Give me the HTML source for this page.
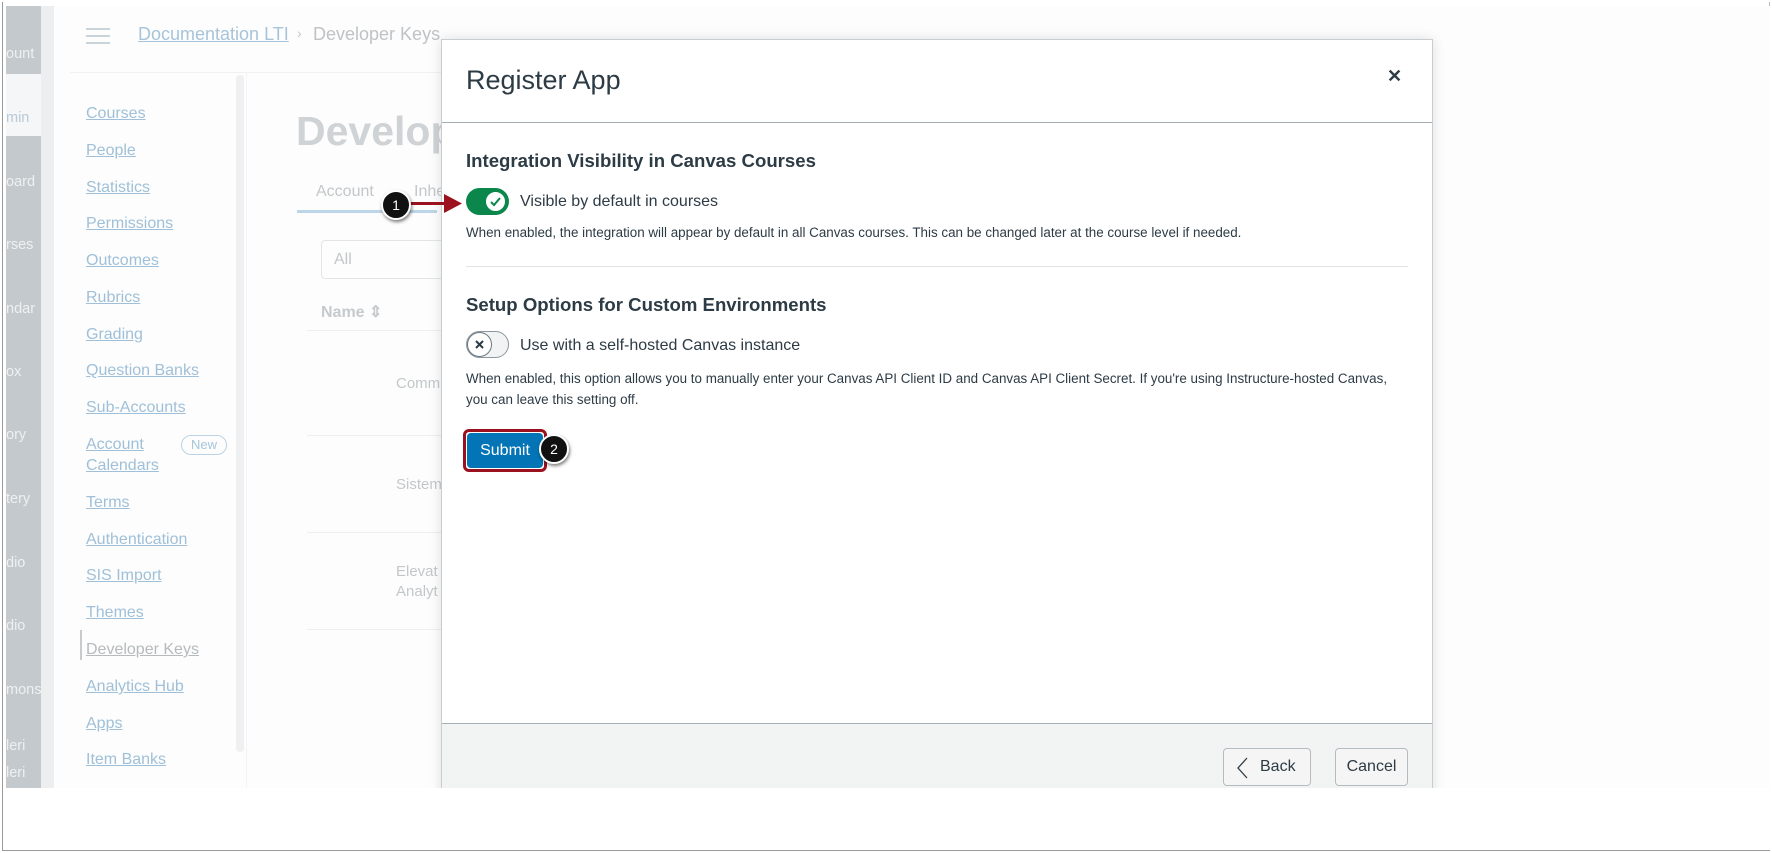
<!DOCTYPE html>
<html><head><meta charset="utf-8"><style>
*{margin:0;padding:0;box-sizing:border-box}
body{width:1772px;height:853px;background:#fff;position:relative;overflow:hidden;font-family:"Liberation Sans",sans-serif;}
.a{position:absolute;white-space:nowrap}
.nav{position:absolute;left:86px;color:#9fc0d8;font-size:16px;text-decoration:underline}
.side{position:absolute;left:6px;width:35px;color:#eef1f2;font-size:14.5px;overflow:hidden}
.t{color:#2d3b45}
</style></head><body>
<div class="a" style="left:2px;top:2px;width:1768px;height:849px;border:1px solid #9a9a9a;border-top:none;border-right:1px solid #bbb"></div>
<div class="a" style="left:6px;top:6px;width:1764px;height:782px;background:#fdfdfd"></div>
<div class="a" style="left:6px;top:6px;width:35px;height:782px;background:#c3c9cd"></div>
<div class="a" style="left:6px;top:74px;width:35px;height:62px;background:#f4f6f7"></div>
<div class="a" style="left:41px;top:6px;width:13px;height:782px;background:#eceeef"></div>
<div class="side" style="top:46px">ount</div>
<div class="side" style="top:110px;color:#b9c9d6">min</div>
<div class="side" style="top:174px">oard</div>
<div class="side" style="top:237px">rses</div>
<div class="side" style="top:301px">ndar</div>
<div class="side" style="top:364px">ox</div>
<div class="side" style="top:427px">ory</div>
<div class="side" style="top:491px">tery</div>
<div class="side" style="top:555px">dio</div>
<div class="side" style="top:618px">dio</div>
<div class="side" style="top:682px">mons</div>
<div class="side" style="top:738px">leri</div>
<div class="side" style="top:765px">leri</div>
<div class="a" style="left:86px;top:28px;width:24px;height:2px;background:#c8d3da;box-shadow:0 7px 0 #c8d3da,0 14px 0 #c8d3da"></div>
<div class="a" style="left:138px;top:24px;font-size:18px;color:#a7c4da;text-decoration:underline">Documentation LTI</div>
<div class="a" style="left:297px;top:25px;font-size:14px;color:#c3c7ca">›</div>
<div class="a" style="left:313px;top:24px;font-size:18px;color:#bfc3c6">Developer Keys</div>
<div class="a" style="left:70px;top:72px;width:1360px;height:1px;background:#f0f1f2"></div>
<div class="nav" style="top:105px">Courses</div>
<div class="nav" style="top:142px">People</div>
<div class="nav" style="top:179px">Statistics</div>
<div class="nav" style="top:215px">Permissions</div>
<div class="nav" style="top:252px">Outcomes</div>
<div class="nav" style="top:289px">Rubrics</div>
<div class="nav" style="top:326px">Grading</div>
<div class="nav" style="top:362px">Question Banks</div>
<div class="nav" style="top:399px">Sub-Accounts</div>
<div class="nav" style="top:436px">Account</div>
<div class="nav" style="top:457px">Calendars</div>
<div class="a" style="left:181px;top:435px;width:46px;height:20px;border:1px solid #bcd3e3;border-radius:10px;color:#a7c4da;font-size:13px;text-align:center;line-height:18px">New</div>
<div class="nav" style="top:494px">Terms</div>
<div class="nav" style="top:531px">Authentication</div>
<div class="nav" style="top:567px">SIS Import</div>
<div class="nav" style="top:604px">Themes</div>
<div class="a" style="left:80px;top:630px;width:2px;height:30px;background:#c7cbce"></div>
<div class="nav" style="top:641px;color:#b6babd">Developer Keys</div>
<div class="nav" style="top:678px">Analytics Hub</div>
<div class="nav" style="top:715px">Apps</div>
<div class="nav" style="top:751px">Item Banks</div>
<div class="a" style="left:236px;top:75px;width:8px;height:677px;background:#eef0f1;border-radius:4px"></div>
<div class="a" style="left:246px;top:72px;width:1px;height:716px;background:#f3f4f5"></div>
<div class="a" style="left:296px;top:108px;font-size:41px;font-weight:bold;color:#cfd3d6">Develope</div>
<div class="a" style="left:316px;top:183px;font-size:16px;color:#c3c7ca">Account</div>
<div class="a" style="left:414px;top:183px;font-size:16px;color:#c3c7ca">Inhe</div>
<div class="a" style="left:297px;top:210px;width:140px;height:3px;background:#bcd6e8"></div>
<div class="a" style="left:321px;top:240px;width:140px;height:39px;border:1px solid #e2e5e7;border-radius:4px;color:#c3c7ca;font-size:16px;padding:10px 12px">All</div>
<div class="a" style="left:321px;top:302px;font-size:16px;font-weight:bold;color:#c6cacd">Name ⇕</div>
<div class="a" style="left:307px;top:330px;width:140px;height:1px;background:#eceeef"></div>
<div class="a" style="left:307px;top:435px;width:140px;height:1px;background:#eceeef"></div>
<div class="a" style="left:307px;top:532px;width:140px;height:1px;background:#eceeef"></div>
<div class="a" style="left:307px;top:629px;width:140px;height:1px;background:#eceeef"></div>
<div class="a" style="left:396px;top:375px;font-size:15px;color:#c3c7ca">Comm</div>
<div class="a" style="left:396px;top:476px;font-size:15px;color:#c3c7ca">Sistem</div>
<div class="a" style="left:396px;top:562px;font-size:15px;color:#c3c7ca;line-height:20px">Elevat<br>Analyt</div>
<div class="a" style="left:441px;top:39px;width:992px;height:760px;background:#fff;border:1px solid #c7cdd1;box-shadow:0 0 12px rgba(0,0,0,.12)"></div>
<div class="a t" style="left:466px;top:65px;font-size:27px">Register App</div>
<div class="a t" style="left:1387px;top:66px;font-size:18px;font-weight:bold">✕</div>
<div class="a" style="left:442px;top:122px;width:990px;height:1px;background:#a5afb5"></div>
<div class="a t" style="left:466px;top:150px;font-size:18.6px;font-weight:bold">Integration Visibility in Canvas Courses</div>
<div class="a" style="left:466px;top:188px;width:43px;height:27px;border-radius:14px;background:#0b874b"></div>
<div class="a" style="left:484px;top:190px;width:23px;height:23px;border-radius:50%;background:#fff;border:2px solid #0b874b"></div>
<svg class="a" style="left:484px;top:190px" width="23" height="23"><path d="M7 12l3 3 6-7" fill="none" stroke="#0b874b" stroke-width="2"/></svg>
<div class="a t" style="left:520px;top:193px;font-size:16px">Visible by default in courses</div>
<div class="a t" style="left:466px;top:225px;font-size:13.4px">When enabled, the integration will appear by default in all Canvas courses. This can be changed later at the course level if needed.</div>
<div class="a" style="left:466px;top:266px;width:942px;height:1px;background:#dfe3e5"></div>
<div class="a t" style="left:466px;top:294px;font-size:18.6px;font-weight:bold">Setup Options for Custom Environments</div>
<div class="a" style="left:466px;top:331px;width:43px;height:27px;border-radius:14px;background:#f2f4f4;border:1px solid #8b969e"></div>
<div class="a" style="left:467px;top:332px;width:25px;height:25px;border-radius:50%;background:#fff;border:1px solid #6b7780"></div>
<svg class="a" style="left:467px;top:332px" width="25" height="25"><path d="M9 9l7 7M16 9l-7 7" stroke="#2d3b45" stroke-width="2"/></svg>
<div class="a t" style="left:520px;top:337px;font-size:16px">Use with a self-hosted Canvas instance</div>
<div class="a t" style="left:466px;top:368px;font-size:13.4px;line-height:21px">When enabled, this option allows you to manually enter your Canvas API Client ID and Canvas API Client Secret. If you're using Instructure-hosted Canvas,<br>you can leave this setting off.</div>
<div class="a" style="left:463px;top:429px;width:84px;height:43px;border:3px solid #9b111e;border-radius:6px"></div>
<div class="a" style="left:467px;top:433px;width:76px;height:35px;background:#0374b5;border-radius:4px;color:#fff;font-size:16px;text-align:center;line-height:35px">Submit</div>
<div class="a" style="left:539px;top:434px;width:30px;height:30px;border-radius:50%;background:#111;border:2px solid #fff;box-shadow:1px 2px 3px rgba(0,0,0,.5);color:#fff;font-size:14px;text-align:center;line-height:26px">2</div>
<div class="a" style="left:408px;top:202px;width:40px;height:3px;background:#9b111e"></div>
<svg class="a" style="left:444px;top:194px" width="20" height="20"><path d="M0 0L18 9.5L0 19z" fill="#9b111e"/></svg>
<div class="a" style="left:381px;top:190px;width:30px;height:30px;border-radius:50%;background:#111;border:2px solid #fff;box-shadow:1px 2px 3px rgba(0,0,0,.5);color:#fff;font-size:14px;text-align:center;line-height:26px">1</div>
<div class="a" style="left:442px;top:723px;width:990px;height:65px;background:#f2f4f4;border-top:1px solid #a5afb5"></div>
<div class="a t" style="left:1223px;top:748px;width:88px;height:38px;border:1px solid #b5bcc1;border-radius:4px;background:#f5f5f5;font-size:16px;line-height:36px;padding-left:36px">Back</div>
<svg class="a" style="left:1236px;top:756px" width="14" height="24"><path d="M11 2L2 12l9 10" fill="none" stroke="#2d3b45" stroke-width="1.3"/></svg>
<div class="a t" style="left:1335px;top:748px;width:73px;height:38px;border:1px solid #b5bcc1;border-radius:4px;background:#f5f5f5;font-size:16px;line-height:36px;text-align:center">Cancel</div>
<div class="a" style="left:0;top:788px;width:1772px;height:62px;background:#fff"></div>
<div class="a" style="left:2px;top:788px;width:1px;height:62px;background:#9a9a9a"></div>
<div class="a" style="left:2px;top:850px;width:1768px;height:1px;background:#9a9a9a"></div>
</body></html>
